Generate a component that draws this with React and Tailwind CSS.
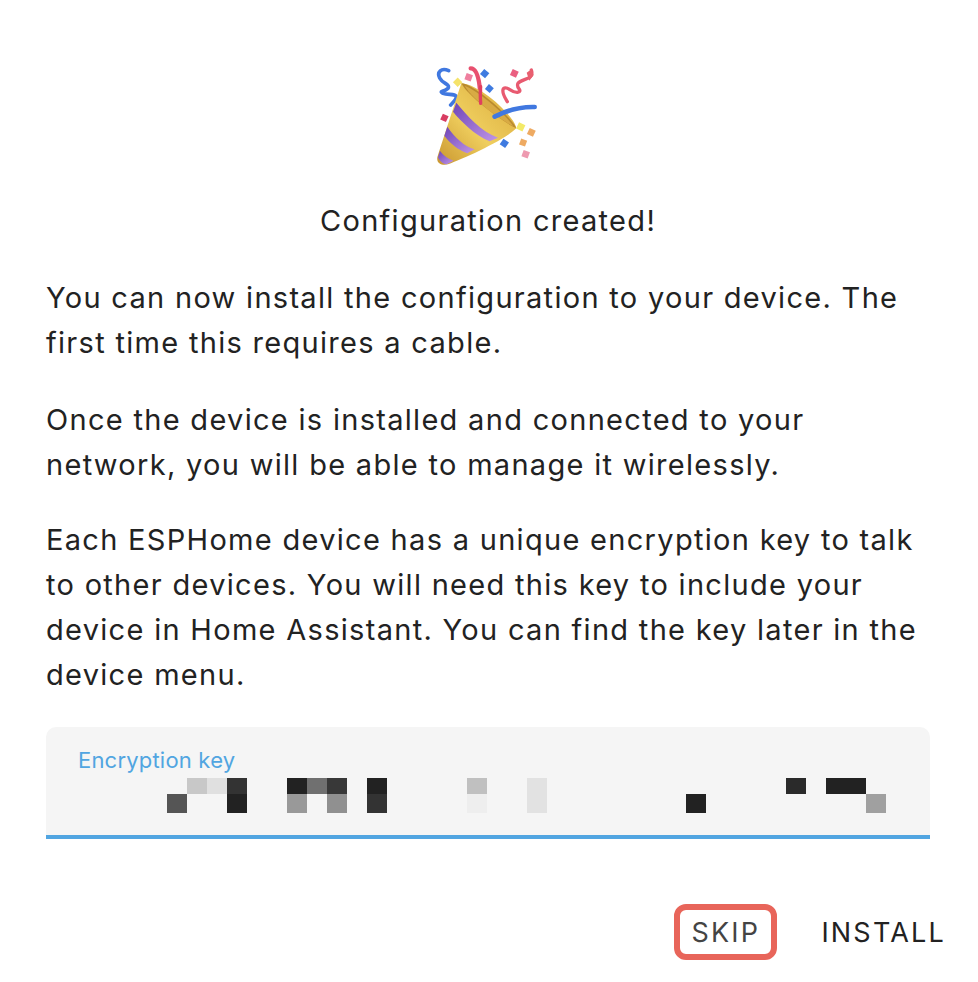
const ff = { fontFamily: 'Inter, "Noto Sans", "Liberation Sans", sans-serif' };

const cells = [
  [187,778,20,16,'#c8c8c8'],[207,778,20,16,'#e0e0e0'],[227,778,20,16,'#333333'],
  [167,794,20,19,'#555555'],[227,794,20,19,'#222222'],
  [287,778,20,16,'#222222'],[307,778,20,16,'#707070'],[327,778,20,16,'#383838'],
  [287,794,20,19,'#999999'],[327,794,20,19,'#909090'],
  [367,778,20,16,'#222222'],[367,794,20,19,'#333333'],
  [467,778,20,16,'#c0c0c0'],[467,794,20,19,'#eeeeee'],
  [527,778,20,35,'#e2e2e2'],
  [686,794,20,19,'#222222'],
  [786,778,20,16,'#2a2a2a'],[826,778,40,16,'#222222'],[866,794,20,19,'#a0a0a0'],
];

function Popper() {
  return (
    <svg width="140" height="130" viewBox="0 0 420 390" className="block blur-[0.4px]">
      <defs>
        <linearGradient id="g" x1="0" y1="1" x2="1" y2="0">
          <stop offset="0" stopColor="#c9962e" />
          <stop offset="0.45" stopColor="#efce5e" />
          <stop offset="1" stopColor="#d9a93a" />
        </linearGradient>
        <linearGradient id="p" x1="0" y1="0" x2="1" y2="1">
          <stop offset="0" stopColor="#6f45b8" />
          <stop offset="1" stopColor="#c096e6" />
        </linearGradient>
      </defs>
      <path d="M92 62C70 52 56 66 65 84C74 102 98 102 90 115C75 128 62 122 75 130C90 136 115 130 115 142C113 152 103 158 98 165" fill="none" stroke="#4078e0" strokeWidth="11" strokeLinecap="round" strokeLinejoin="round" />
      <path d="M158 55C175 55 183 85 186 120C187 135 187 150 188 160" fill="none" stroke="#e8506f" strokeWidth="13" strokeLinecap="round" />
      <path d="M340 60C350 90 312 85 300 100C292 115 318 122 298 127C278 128 268 105 256 116C250 128 262 145 268 155" fill="none" stroke="#e85a70" strokeWidth="10" strokeLinecap="round" />
      <path d="M340 58L347 75L334 92L326 68Z" fill="#e8606f" />
      <path d="M130 100C120 130 75 270 58 322C55 340 72 348 90 343C140 325 260 270 295 235C290 200 190 105 130 100Z" fill="url(#g)" />
      <path d="M130 100C165 100 285 205 295 235C260 220 150 140 130 100Z" fill="#b98a2e" />
      <path d="M140 108C175 118 265 195 285 228C255 215 165 150 140 108Z" fill="#d8aa44" />
      <path d="M115 158C150 200 190 245 240 263L215 274C170 255 130 215 105 185Z" fill="url(#p)" />
      <path d="M88 230C110 262 140 290 170 298L148 310C122 300 95 280 79 257Z" fill="url(#p)" />
      <path d="M66 303C78 318 92 328 107 332L88 342C78 345 65 335 60 322Z" fill="url(#p)" />
      <path d="M188 110C186 125 187 145 188 160" fill="none" stroke="#e0405f" strokeWidth="10" strokeLinecap="round" />
      <path d="M230 200C268 180 310 170 350 171" fill="none" stroke="#4078e0" strokeWidth="14" strokeLinecap="round" />
      <g>
        <rect x="109" y="87" width="20" height="20" transform="rotate(45 119 97)" fill="#f5e36a" />
        <rect x="142" y="72" width="20" height="20" transform="rotate(20 152 82)" fill="#ef7f9f" />
        <rect x="190" y="61" width="20" height="20" transform="rotate(40 200 71)" fill="#3f7be0" />
        <rect x="205" y="106" width="19" height="19" transform="rotate(40 214 115)" fill="#3f7be0" />
        <rect x="279" y="60" width="20" height="20" transform="rotate(25 289 70)" fill="#ea5f80" />
        <rect x="70" y="194" width="19" height="19" transform="rotate(25 79 203)" fill="#d83d62" />
        <rect x="298" y="220" width="21" height="21" transform="rotate(25 308 230)" fill="#f3ea68" />
        <rect x="330" y="237" width="20" height="20" transform="rotate(25 340 247)" fill="#eeaa62" />
        <rect x="306" y="268" width="19" height="19" transform="rotate(20 315 277)" fill="#eeaa62" />
        <rect x="249" y="270" width="20" height="20" transform="rotate(35 259 280)" fill="#3f7be0" />
        <rect x="313" y="303" width="20" height="20" transform="rotate(20 323 313)" fill="#ee9ab0" />
      </g>
    </svg>
  );
}

export default function App() {
  return (
    <div style={ff} className="h-[982px] w-[978px] overflow-hidden bg-white flex flex-col pl-[46px] pr-[48px] pt-[50px] text-[#222222]">
      <div className="flex justify-center h-[130px]"><Popper /></div>
      <h1 className="mt-[21px] h-[40px] flex items-center justify-center text-[29px] font-normal tracking-[1.3px]">Configuration created!</h1>
      <p className="mt-[34px] text-[29px] leading-[45px] tracking-[1.3px]">You can now install the configuration to your device. The<br />first time this requires a cable.</p>
      <p className="mt-[32px] text-[29px] leading-[45px] tracking-[1.3px]">Once the device is installed and connected to your<br />network, you will be able to manage it wirelessly.</p>
      <p className="mt-[30px] text-[29px] leading-[45px] tracking-[1.3px]">Each ESPHome device has a unique encryption key to talk<br />to other devices. You will need this key to include your<br />device in Home Assistant. You can find the key later in the<br />device menu.</p>
      <div className="mt-[30px] h-[112px] bg-[#f5f5f5] rounded-t-[10px] border-b-4 border-[#51a5e1] px-[32px] pt-[18px] flex flex-col">
        <div className="text-[22px] leading-[30px] tracking-[0.2px] text-[#51a5e1]">Encryption key</div>
        <svg width="884" height="35" viewBox="46 778 884 35" className="block -ml-[32px] mt-[3px] shrink-0">
          {cells.map(([x, y, w, h, c], i) => (
            <rect key={i} x={x} y={y} width={w} height={h} fill={c} />
          ))}
        </svg>
      </div>
      <div className="mt-[65px] flex items-center -mr-[16px] justify-end">
        <button className="h-[56px] w-[103px] border-[6px] border-[#e8655a] rounded-[12px] pt-[2px] text-[27px] tracking-[2.2px] text-[#444444] flex items-center justify-center">SKIP</button>
        <button className="ml-[44px] pt-[2px] text-[27px] tracking-[2.2px] text-[#222222]">INSTALL</button>
      </div>
    </div>
  );
}
